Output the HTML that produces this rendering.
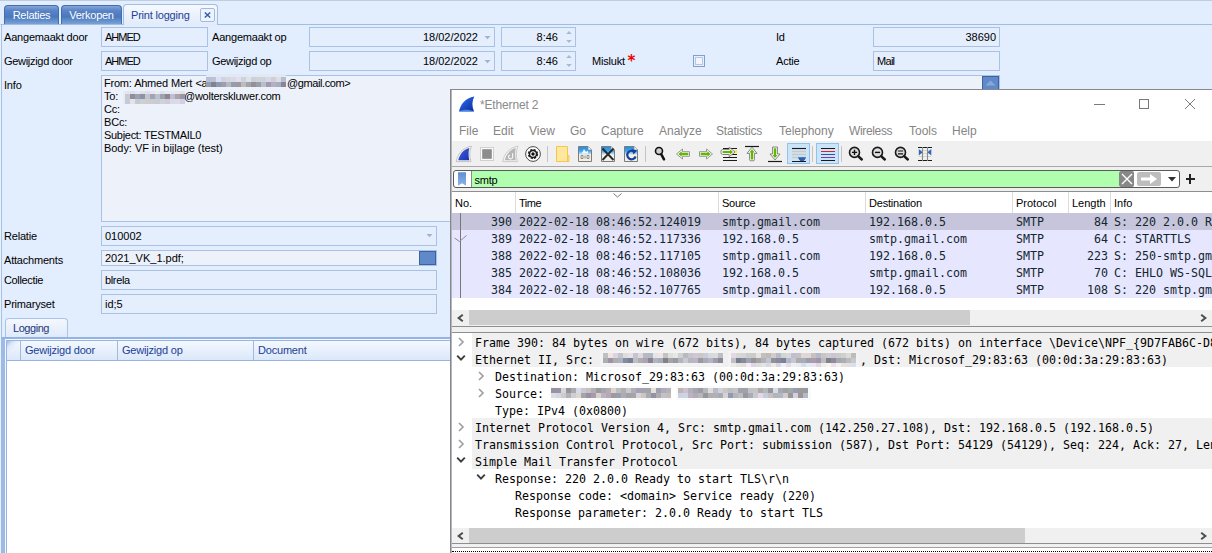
<!DOCTYPE html>
<html lang="nl">
<head>
<meta charset="utf-8">
<title>Print logging</title>
<style>
*{box-sizing:border-box;margin:0;padding:0}
html,body{width:1212px;height:553px;overflow:hidden;background:#e2edfd}
body{position:relative;font-family:"Liberation Sans",sans-serif;font-size:11px;color:#000;-webkit-font-smoothing:antialiased}
.abs,.lbl,.fld,.tab,.mn,.hd,.pk,.dt{position:absolute;white-space:pre}
/* ---------- underlying form ---------- */
#tabstrip{left:0;top:0;width:1212px;height:24px;background:#e2edfd;border-top:1px solid #bfcde3}
#content{left:0;top:24px;width:1212px;height:529px;background:#e2edfd;border-top:1px solid #a3bde0;border-left:1px solid #e9f1fc;box-shadow:inset 1px 0 0 #a6c0e8}
.tab{top:5px;height:19px;letter-spacing:-0.25px;border:1px solid #3f6db6;border-bottom:none;border-radius:4px 4px 0 0;color:#fff;line-height:18px;text-align:center;
 background:linear-gradient(#86a5d6 0,#5a85c6 25%,#4a78bd 60%,#79a2d6 100%)}
.tab.act{top:4px;height:21px;background:linear-gradient(#f6f9fe,#e1ebfb);border-color:#a3bde0;color:#223f95;line-height:20px;text-align:left;padding-left:7px}
.lbl{left:4px;height:14px;line-height:14px;letter-spacing:-0.2px}
.fld{height:20px;border:1px solid #a9c1e4;background:#e4eefc;line-height:18px;padding:0 3px}
.fld.r{text-align:right}
.fld.g{background:#ecf1fa}
/* ---------- wireshark ---------- */
#ws{left:450px;top:89px;width:770px;height:470px;background:#fff;border:1px solid #86888e}
.mn{top:124px;font-size:12px;color:#858585;line-height:14px}
.hd{top:197px;font-size:11px;line-height:13px;color:#000}
.mono{font-family:"DejaVu Sans Mono","Liberation Mono",monospace;font-size:11.63px}
.pk{height:17px;line-height:18px;font-family:"DejaVu Sans Mono","Liberation Mono",monospace;font-size:11.63px;color:#12272e}
.dt{height:17px;line-height:18px;font-family:"DejaVu Sans Mono","Liberation Mono",monospace;font-size:11.63px;color:#000}
</style>
</head>
<body>
<!-- ================= underlying application ================= -->
<div class="abs" id="tabstrip"></div>
<div class="abs" id="content"></div>
<div class="tab" style="left:4px;width:55px">Relaties</div>
<div class="tab" style="left:61px;width:61px">Verkopen</div>
<div class="tab act" style="left:123px;width:95px;letter-spacing:-0.2px">Print logging</div>
<div class="abs" style="left:200px;top:8px;width:15px;height:14px;border:1px solid #a3badd;border-radius:2px;background:#eef4fd"></div>
<svg class="abs" style="left:204px;top:12px" width="7" height="6" viewBox="0 0 7 6"><path d="M0.8 0.5L6.2 5.5M6.2 0.5L0.8 5.5" stroke="#3560b0" stroke-width="1.5" fill="none"/></svg>

<div class="lbl" style="top:30px">Aangemaakt door</div>
<div class="fld" style="left:101px;top:27px;width:107px;letter-spacing:-1px">AHMED</div>
<div class="lbl" style="left:212px;top:30px">Aangemaakt op</div>
<div class="fld r" style="left:309px;top:27px;width:186px;padding-right:16px">18/02/2022</div>
<div class="fld r" style="left:501px;top:27px;width:75px;padding-right:17px">8:46</div>
<div class="lbl" style="left:776px;top:30px">Id</div>
<div class="fld r" style="left:873px;top:27px;width:127px">38690</div>

<div class="lbl" style="top:54px;letter-spacing:-0.3px">Gewijzigd door</div>
<div class="fld" style="left:101px;top:51px;width:107px;letter-spacing:-1px">AHMED</div>
<div class="lbl" style="left:212px;top:54px;letter-spacing:-0.3px">Gewijzigd op</div>
<div class="fld r" style="left:309px;top:51px;width:186px;padding-right:16px">18/02/2022</div>
<div class="fld r" style="left:501px;top:51px;width:75px;padding-right:17px">8:46</div>
<div class="lbl" style="left:592px;top:54px">Mislukt</div>
<div class="lbl" style="left:627.5px;top:51px;color:#f00000;font-size:15px;font-weight:bold;font-family:'DejaVu Sans',sans-serif;line-height:20px;height:20px">*</div>
<div class="abs" style="left:693px;top:55px;width:12px;height:12px;border:1px solid #7f9fd0;background:#e9f0fb"></div>
<div class="abs" style="left:695px;top:57px;width:8px;height:8px;border:1px solid #b4c8e6;background:#f2f6fc"></div>
<div class="lbl" style="left:776px;top:54px">Actie</div>
<div class="fld" style="left:873px;top:51px;width:127px;letter-spacing:-0.7px">Mail</div>

<div class="lbl" style="top:78px">Info</div>
<div class="fld g" style="left:101px;top:75px;width:899px;height:147px"></div>
<div class="lbl it" style="left:104px;top:76px;letter-spacing:-0.25px;word-spacing:0.5px">From: Ahmed Mert &lt;a</div>
<div class="lbl it" style="left:287px;top:76px;letter-spacing:-0.4px">@gmail.com&gt;</div>
<div class="lbl it" style="left:104px;top:89px">To:</div>
<div class="lbl it" style="left:184px;top:89px;letter-spacing:-0.25px">@wolterskluwer.com</div>
<div class="lbl it" style="left:104px;top:102px">Cc:</div>
<div class="lbl it" style="left:104px;top:115px">BCc:</div>
<div class="lbl it" style="left:104px;top:128px;letter-spacing:-0.3px">Subject: TESTMAIL0</div>
<div class="lbl it" style="left:104px;top:141px;letter-spacing:-0.05px">Body: VF in bijlage (test)</div>

<div class="abs" style="left:982px;top:76px;width:17px;height:14px;background:#5f89c8;border:1px solid #3d62a0"></div>
<svg class="abs" style="left:985px;top:80px" width="11" height="6" viewBox="0 0 11 6"><path d="M0.5 5.5L5.5 0.5L10.5 5.5Z" fill="#86a9dc"/></svg>

<div class="lbl" style="top:229px">Relatie</div>
<div class="fld" style="left:101px;top:226px;width:336px">010002</div>
<div class="lbl" style="top:253px">Attachments</div>
<div class="fld g" style="left:101px;top:250px;width:336px;height:16px;line-height:14px">2021_VK_1.pdf;</div>
<div class="abs" style="left:419px;top:251px;width:17px;height:14px;background:#5f89c8;border:1px solid #3d62a0"></div>
<div class="lbl" style="top:273px;letter-spacing:-0.35px">Collectie</div>
<div class="fld" style="left:101px;top:270px;width:336px;letter-spacing:-0.35px">blrela</div>
<div class="lbl" style="top:297px">Primaryset</div>
<div class="fld" style="left:101px;top:294px;width:336px">id;5</div>

<svg class="abs" width="0" height="0" style="left:0;top:0"><defs><filter id="bl" x="-5%" y="-20%" width="110%" height="140%"><feGaussianBlur stdDeviation="0.6"/></filter></defs></svg>
<svg class="abs" style="left:484px;top:36px" width="7" height="4" viewBox="0 0 7 4"><path d="M0.5 0H6.5L3.5 3.2Z" fill="#9fb2d0"/></svg><svg class="abs" style="left:566px;top:31px" width="6" height="12" viewBox="0 0 6 12"><path d="M0.2 3L3 0L5.8 3ZM0.2 9L3 12L5.8 9Z" fill="#a9b9d3"/></svg>
<svg class="abs" style="left:484px;top:60px" width="7" height="4" viewBox="0 0 7 4"><path d="M0.5 0H6.5L3.5 3.2Z" fill="#9fb2d0"/></svg><svg class="abs" style="left:566px;top:55px" width="6" height="12" viewBox="0 0 6 12"><path d="M0.2 3L3 0L5.8 3ZM0.2 9L3 12L5.8 9Z" fill="#a9b9d3"/></svg>
<svg class="abs" style="left:426px;top:234px" width="7" height="4" viewBox="0 0 7 4"><path d="M0.5 0H6.5L3.5 3.2Z" fill="#9fb2d0"/></svg>
<!--MOSA-->
<svg class="abs" style="left:206px;top:74px" width="80" height="13" viewBox="0 0 80 13" shape-rendering="crispEdges"><rect width="80" height="13" fill="#e3e9f4"/><rect x="0" y="3" width="5" height="5" fill="#b6c1d5"/><rect x="5" y="3" width="5" height="5" fill="#bdc2ce"/><rect x="10" y="3" width="5" height="5" fill="#d6e2f5"/><rect x="15" y="3" width="5" height="5" fill="#d6cfe5"/><rect x="20" y="3" width="5" height="5" fill="#d4d9dd"/><rect x="25" y="3" width="5" height="5" fill="#d6dbe7"/><rect x="30" y="3" width="5" height="5" fill="#e4def3"/><rect x="35" y="3" width="5" height="5" fill="#cdd2dd"/><rect x="40" y="3" width="5" height="5" fill="#dde3e6"/><rect x="45" y="3" width="5" height="5" fill="#cbd0dc"/><rect x="50" y="3" width="5" height="5" fill="#cfd4d7"/><rect x="55" y="3" width="5" height="5" fill="#ced3de"/><rect x="60" y="3" width="5" height="5" fill="#d5dbe6"/><rect x="65" y="3" width="5" height="5" fill="#ccd1d5"/><rect x="70" y="3" width="5" height="5" fill="#e1dee2"/><rect x="75" y="3" width="5" height="5" fill="#b5bfd3"/><rect x="0" y="8" width="5" height="5" fill="#959fb3"/><rect x="5" y="8" width="5" height="5" fill="#7b8499"/><rect x="10" y="8" width="5" height="5" fill="#8f98ad"/><rect x="15" y="8" width="5" height="5" fill="#9b9eab"/><rect x="20" y="8" width="5" height="5" fill="#b4b8c5"/><rect x="25" y="8" width="5" height="5" fill="#999daa"/><rect x="30" y="8" width="5" height="5" fill="#9e999e"/><rect x="35" y="8" width="5" height="5" fill="#bebabe"/><rect x="40" y="8" width="5" height="5" fill="#a1a5a9"/><rect x="45" y="8" width="5" height="5" fill="#959095"/><rect x="50" y="8" width="5" height="5" fill="#9a9daa"/><rect x="55" y="8" width="5" height="5" fill="#b9beca"/><rect x="60" y="8" width="5" height="5" fill="#a39ab1"/><rect x="65" y="8" width="5" height="5" fill="#b5aec4"/><rect x="70" y="8" width="5" height="5" fill="#a4aec3"/><rect x="75" y="8" width="5" height="5" fill="#8d849c"/></svg>
<svg class="abs" style="left:123px;top:91px" width="62" height="13" viewBox="0 0 62 13" shape-rendering="crispEdges"><rect width="62" height="13" fill="#e6ebf5"/><rect x="2" y="0" width="5" height="3" fill="#e1e6f0"/><rect x="7" y="0" width="5" height="3" fill="#d8e2f5"/><rect x="12" y="0" width="5" height="3" fill="#ebe4f8"/><rect x="17" y="0" width="5" height="3" fill="#dee3e5"/><rect x="22" y="0" width="5" height="3" fill="#dadfe9"/><rect x="27" y="0" width="5" height="3" fill="#eae3f7"/><rect x="32" y="0" width="5" height="3" fill="#e7ecee"/><rect x="37" y="0" width="5" height="3" fill="#dde2ec"/><rect x="42" y="0" width="5" height="3" fill="#e3e8f2"/><rect x="47" y="0" width="5" height="3" fill="#e5eaf4"/><rect x="52" y="0" width="5" height="3" fill="#eae7e9"/><rect x="57" y="0" width="5" height="3" fill="#dee3e5"/><rect x="2" y="3" width="5" height="5" fill="#cbc7ca"/><rect x="7" y="3" width="5" height="5" fill="#8c8f9c"/><rect x="12" y="3" width="5" height="5" fill="#9ea1ae"/><rect x="17" y="3" width="5" height="5" fill="#8a93a8"/><rect x="22" y="3" width="5" height="5" fill="#c0c5d0"/><rect x="27" y="3" width="5" height="5" fill="#a1a4b1"/><rect x="32" y="3" width="5" height="5" fill="#bcc0cc"/><rect x="37" y="3" width="5" height="5" fill="#9da1ad"/><rect x="42" y="3" width="5" height="5" fill="#8d878d"/><rect x="47" y="3" width="5" height="5" fill="#c3bbd1"/><rect x="52" y="3" width="5" height="5" fill="#a9a4a8"/><rect x="57" y="3" width="5" height="5" fill="#9c93aa"/><rect x="2" y="8" width="5" height="5" fill="#c1cbde"/><rect x="7" y="8" width="5" height="5" fill="#e6e3e6"/><rect x="12" y="8" width="5" height="5" fill="#c4c9d4"/><rect x="17" y="8" width="5" height="5" fill="#cdd1d4"/><rect x="22" y="8" width="5" height="5" fill="#cfcbce"/><rect x="27" y="8" width="5" height="5" fill="#c9cdd0"/><rect x="32" y="8" width="5" height="5" fill="#c7cbd6"/><rect x="37" y="8" width="5" height="5" fill="#cfd3d6"/><rect x="42" y="8" width="5" height="5" fill="#d1c9de"/><rect x="47" y="8" width="5" height="5" fill="#d7dbe6"/><rect x="52" y="8" width="5" height="5" fill="#dfd7ec"/><rect x="57" y="8" width="5" height="5" fill="#cdd2dc"/></svg>
<!--/MOSA-->
<!-- logging tab + grid -->
<div class="abs" style="left:5px;top:318px;width:63px;height:20px;border:1px solid #a9c4e8;border-bottom:none;border-radius:4px 4px 0 0;background:linear-gradient(#f4f8fe,#dde9fa);color:#1c3878;line-height:19px;padding-left:7px;letter-spacing:-0.45px">Logging</div>
<div class="abs" style="left:1px;top:337px;width:1211px;height:216px;background:linear-gradient(#8fb0e1,#9dbbe7 3px,#9dbbe7)"></div>
<div class="abs" style="left:5px;top:339px;width:1207px;height:214px;background:#f2f7ff"></div>
<div class="abs" style="left:6px;top:340px;width:1206px;height:213px;background:#fff;border-left:1px solid #98b6e2;border-top:1px solid #98b6e2"></div>
<div class="abs" style="left:7px;top:341px;width:1205px;height:20px;background:linear-gradient(#f4f8fe,#dbe8fa);border-bottom:1px solid #94b4e2"></div>
<div class="abs" style="left:7px;top:341px;width:13px;height:19px;background:linear-gradient(135deg,#9db8df 0,#dbe7f8 22%,rgba(230,239,252,0) 45%)"></div>
<div class="abs" style="left:20px;top:341px;width:1px;height:19px;background:#9dbae4"></div>
<div class="abs" style="left:117px;top:341px;width:1px;height:19px;background:#9dbae4"></div>
<div class="abs" style="left:253px;top:341px;width:1px;height:19px;background:#9dbae4"></div>
<div class="lbl" style="left:25px;top:343px;color:#1c3f94">Gewijzigd door</div>
<div class="lbl" style="left:122px;top:343px;color:#1c3f94">Gewijzigd op</div>
<div class="lbl" style="left:258px;top:343px;color:#1c3f94">Document</div>

<!-- ================= wireshark window ================= -->
<div class="abs" id="ws"></div>
<!-- title bar -->
<svg class="abs" style="left:457px;top:95px" width="19" height="18" viewBox="457 95 19 18"><defs><linearGradient id="lg" x1="0" y1="0" x2="0.9" y2="1"><stop offset="0" stop-color="#4f8df0"/><stop offset="0.45" stop-color="#1f55cf"/><stop offset="1" stop-color="#0b2f9c"/></linearGradient></defs><path d="M459 111.4C460.3 104.3 465.2 98 474.3 96.4C472 101 471.7 106.2 474 111.4Z" fill="url(#lg)"/><path d="M459 111.4C463 109.3 469.5 108.9 474 111.4Z" fill="#5b95f2" opacity=".8"/></svg>
<div class="abs" style="left:480px;top:98px;font-size:12px;line-height:15px;color:#8a8a8a;letter-spacing:-0.15px">*Ethernet 2</div>
<div class="abs" style="left:1094px;top:104px;width:11px;height:1px;background:#7a7a7a"></div>
<div class="abs" style="left:1139px;top:99px;width:10px;height:10px;border:1px solid #7a7a7a"></div>
<svg class="abs" style="left:1184px;top:98px" width="12" height="12" viewBox="0 0 12 12"><path d="M1 1L11 11M11 1L1 11" stroke="#7a7a7a" stroke-width="1" fill="none"/></svg>
<!-- menu -->
<div class="mn" style="left:459px">File</div>
<div class="mn" style="left:493px">Edit</div>
<div class="mn" style="left:529px">View</div>
<div class="mn" style="left:570px">Go</div>
<div class="mn" style="left:601px">Capture</div>
<div class="mn" style="left:659px">Analyze</div>
<div class="mn" style="left:716px;letter-spacing:-0.2px">Statistics</div>
<div class="mn" style="left:779px">Telephony</div>
<div class="mn" style="left:849px;letter-spacing:-0.35px">Wireless</div>
<div class="mn" style="left:909px">Tools</div>
<div class="mn" style="left:952px">Help</div>
<!-- toolbar -->
<div class="abs" style="left:451px;top:141px;width:761px;height:50px;background:#f0f0f0"></div>
<div class="abs" style="left:451px;top:166px;width:761px;height:1px;background:#a8a8a8"></div>
<svg class="abs" style="left:452px;top:141px" width="500" height="25" viewBox="452 141 500 25">
<defs><linearGradient id="fb" x1="0" y1="0" x2="1" y2="1"><stop offset="0" stop-color="#3a63e0"/><stop offset="1" stop-color="#1f2fb0"/></linearGradient><linearGradient id="fg" x1="0" y1="0" x2="0" y2="1"><stop offset="0" stop-color="#1f8ee2"/><stop offset="0.3" stop-color="#3fa2e8"/><stop offset="0.5" stop-color="#bfe0f6"/><stop offset="0.56" stop-color="#f4f4ea"/><stop offset="1" stop-color="#efefe2"/></linearGradient></defs>
<path d="M456.2 161.6C457.6 154.2 462.4 147.8 471.4 146.1C469.4 151 469.2 156.4 471 161.6Z" fill="#f4f4f4" stroke="#bdbdbd" stroke-width="0.9"/><path d="M458.3 160.3C459.6 154.6 463.2 149.8 469.3 148.1C468.3 152 468.4 156.3 469.3 160.3Z" fill="url(#fb)"/>
<rect x="480.5" y="147.5" width="13" height="13" fill="#fafafa" stroke="#d0d0d0" stroke-width="1"/><rect x="482.2" y="149.2" width="9.6" height="9.6" fill="#8c8c8c"/>
<path d="M502.7 161.6C504.1 154.2 508.9 147.8 517.9 146.1C515.9 151 515.7 156.4 517.5 161.6Z" fill="#f4f4f4" stroke="#c6c6c6" stroke-width="0.9"/><path d="M504.8 160.3C506.1 154.6 509.7 149.8 515.8 148.1C514.8 152 514.9 156.3 515.8 160.3Z" fill="#b6b6b6"/><path d="M512.6 153.2V157A2 2 0 1 1 510 155" fill="none" stroke="#f4f4f4" stroke-width="1.2"/>
<circle cx="533" cy="154" r="7.4" fill="#fff" stroke="#4a4a4a" stroke-width="1"/><circle cx="533" cy="154" r="4.3" fill="none" stroke="#1c1c1c" stroke-width="1.7" stroke-dasharray="2.2 1.18"/><circle cx="533" cy="154" r="3.5" fill="none" stroke="#1c1c1c" stroke-width="1.5"/><circle cx="533" cy="154" r="1.7" fill="#111"/>
<path d="M547.5 146V162" stroke="#c4c4c4" stroke-width="1"/><path d="M645.5 146V162" stroke="#c4c4c4" stroke-width="1"/><path d="M812.5 146V162" stroke="#c4c4c4" stroke-width="1"/><path d="M841.5 146V162" stroke="#c4c4c4" stroke-width="1"/>
<path d="M556.5 146.5H567.5V155.5H569V161.5H556.5Z" fill="#ffe79e" stroke="#f3c74c" stroke-width="1"/><path d="M567.5 155.5V161.5" stroke="#f3c74c" stroke-width="1"/>
<path d="M578.5 146.5H588L591.5 150V161.5H578.5Z" fill="url(#fg)" stroke="#7c7c7c" stroke-width="1"/><path d="M588 146.5V150H591.5" fill="#fff" stroke="#8c8c8c" stroke-width="0.8"/><path d="M581 158.5h2v-3h-2zM585 155.5v3M587 158.5h2v-3h-2z" fill="none" stroke="#777" stroke-width="0.8"/><path d="M582 153L584 149L586 152L588 150.5V153.5H581Z" fill="#fff" opacity=".9"/>
<path d="M601.5 146.5H611L614.5 150V161.5H601.5Z" fill="url(#fg)" stroke="#7c7c7c" stroke-width="1"/><path d="M611 146.5V150H614.5" fill="#fff" stroke="#8c8c8c" stroke-width="0.8"/><path d="M602.5 148.5L613.5 160M613.5 148.5L602.5 160" stroke="#2a2a2a" stroke-width="1.9"/>
<path d="M624.5 146.5H634L637.5 150V161.5H624.5Z" fill="url(#fg)" stroke="#7c7c7c" stroke-width="1"/><path d="M634 146.5V150H637.5" fill="#fff" stroke="#8c8c8c" stroke-width="0.8"/><path d="M634.8 152.2A4.3 4.3 0 1 0 635.6 156.5" fill="none" stroke="#1b3f9c" stroke-width="2.2"/><path d="M631.5 149L637 150.5L633.5 154.5Z" fill="#1b3f9c"/>
<circle cx="659" cy="151" r="3.5" fill="#d0d0d0" stroke="#111" stroke-width="1.6"/><path d="M661.3 154.3L664 159.3" stroke="#111" stroke-width="2.5" stroke-linecap="round"/>
<path d="M676.5 154L682.5 149V151.7H689.5V156.3H682.5V159Z" fill="#fff" stroke="#8c8c8c" stroke-width="0.9"/><path d="M678.3 154L681.6 151.2V152.8H688.4V155.2H681.6V156.8Z" fill="#62b800"/>
<path d="M712.5 154L706.5 149V151.7H699.5V156.3H706.5V159Z" fill="#fff" stroke="#8c8c8c" stroke-width="0.9"/><path d="M710.7 154L707.4 151.2V152.8H700.6V155.2H707.4V156.8Z" fill="#62b800"/>
<path d="M723 148.5H737M723 154.5H737M723 157.5H737M723 160.5H737" stroke="#1a1a1a" stroke-width="1"/><rect x="733.5" y="150" width="3.5" height="3" fill="#ffe44a"/><path d="M735 152L729.2 147.2V149.6H722.6Q721 149.6 721 151.2V152.8Q721 154.4 722.6 154.4H729.2V156.8Z" fill="#fff" stroke="#777" stroke-width="0.9"/><path d="M733 152L730 149.6V151H722.6V153H730V154.4Z" fill="#62b800"/>
<path d="M745 146.5H759" stroke="#1a1a1a" stroke-width="1.2"/><path d="M752 147.2L757 153.4H754.4V159.6Q754.4 160.8 753.2 160.8H750.8Q749.6 160.8 749.6 159.6V153.4H747Z" fill="#fff" stroke="#777" stroke-width="0.9"/><path d="M752 149.2L754.6 152.4H753.2V159.4H750.8V152.4H749.4Z" fill="#62b800"/>
<path d="M768 161.5H782" stroke="#1a1a1a" stroke-width="1.2"/><path d="M775 160L780 154H777.4V147H772.6V154H770Z" fill="#fff" stroke="#777" stroke-width="0.9"/><path d="M775 158L777.6 155H776.2V148.2H773.8V155H772.4Z" fill="#62b800"/>
<rect x="787.5" y="143.5" width="22" height="20" fill="#cce4f7" stroke="#8fc3ee" stroke-width="1"/><path d="M792 148.5H806" stroke="#1a1a1a" stroke-width="1.1"/><path d="M792 151.4H806M792 154.4H806M792 157.4H806" stroke="#c9c9bf" stroke-width="1.5"/><path d="M792 161.5H806" stroke="#1a1a1a" stroke-width="1"/><path d="M798 157.2H806C805.5 159.2 804.5 160 803.5 161H800.5C799.5 160 798.5 159.2 798 157.2Z" fill="#2f5fb4"/>
<rect x="816.5" y="143.5" width="22" height="20" fill="#cce4f7" stroke="#8fc3ee" stroke-width="1"/><path d="M821 148.5H835M821 160.5H835" stroke="#1a1a1a" stroke-width="1.2"/><path d="M821 151.5H835" stroke="#e02020" stroke-width="1"/><path d="M821 154.5H835" stroke="#2a50c0" stroke-width="1"/><path d="M821 157.5H835" stroke="#7a3f9a" stroke-width="1"/>
<circle cx="854.5" cy="152.4" r="5" fill="#dedede" stroke="#1a1a1a" stroke-width="1.6"/><path d="M858.4 156.3L861.8 159.5" stroke="#1a1a1a" stroke-width="2.5" stroke-linecap="round"/><path d="M851.9 152.4H857.1M854.5 149.8V155.0" stroke="#111" stroke-width="1.4"/><circle cx="877.5" cy="152.4" r="5" fill="#dedede" stroke="#1a1a1a" stroke-width="1.6"/><path d="M881.4 156.3L884.8 159.5" stroke="#1a1a1a" stroke-width="2.5" stroke-linecap="round"/><path d="M874.9 152.4H880.1" stroke="#111" stroke-width="1.4"/><circle cx="900.5" cy="152.4" r="5" fill="#dedede" stroke="#1a1a1a" stroke-width="1.6"/><path d="M904.4 156.3L907.8 159.5" stroke="#1a1a1a" stroke-width="2.5" stroke-linecap="round"/><path d="M897.9 151.0H903.1M897.9 153.8H903.1" stroke="#111" stroke-width="1.2"/>
<path d="M918 147.5H932M918 160.5H932" stroke="#1a1a1a" stroke-width="1.1"/><path d="M919 150.5H931M919 153.5H931M919 156.5H931" stroke="#d2d2ca" stroke-width="0.9"/><path d="M922.5 147V161M927.5 147V161" stroke="#8a8a8a" stroke-width="1.1"/><path d="M918.8 149L922.6 152.3L918.8 155.6ZM931.3 149L927.5 152.3L931.3 155.6Z" fill="#3068b8"/>
</svg>
<!-- filter bar -->
<div class="abs" style="left:453px;top:170px;width:727px;height:18px;border:1px solid #5a5a5a;border-radius:3px;background:#fff"></div>
<div class="abs" style="left:471px;top:171px;width:648px;height:16px;background:#afffaf;border-left:1px solid #8a8a8a"></div>
<svg class="abs" style="left:458px;top:172px" width="8" height="14" viewBox="0 0 8 14"><defs><linearGradient id="bk" x1="0" y1="0" x2="0" y2="1"><stop offset="0" stop-color="#5f8fd6"/><stop offset="1" stop-color="#8fb3e4"/></linearGradient></defs><path d="M0 0.3H8V13.7L4 11.2L0 13.7Z" fill="url(#bk)"/></svg>
<div class="abs" style="left:474.5px;top:173px;font-size:11px;line-height:14px;letter-spacing:-0.2px">smtp</div>
<div class="abs" style="left:1119px;top:171px;width:15px;height:16px;background:#878787;border-radius:2px"></div>
<svg class="abs" style="left:1121px;top:173px" width="12" height="12" viewBox="0 0 12 12"><path d="M1 1L11 11M11 1L1 11" stroke="#fff" stroke-width="1.4" fill="none"/></svg>
<div class="abs" style="left:1137px;top:172px;width:24px;height:14px;background:#bdbdbd;border-radius:2px"></div>
<svg class="abs" style="left:1140px;top:173px" width="18" height="12" viewBox="0 0 18 12"><path d="M1 4.5H10V1L17 6L10 11V7.5H1Z" fill="#fff"/></svg>
<svg class="abs" style="left:1168px;top:177px" width="8" height="5" viewBox="0 0 8 5"><path d="M0 0H8L4 4.5Z" fill="#303030"/></svg>
<div class="abs" style="left:1186px;top:178px;width:9px;height:2px;background:#222"></div>
<div class="abs" style="left:1189px;top:174px;width:2px;height:10px;background:#222"></div>
<!-- packet list -->
<div class="abs" style="left:451px;top:191px;width:761px;height:136px;background:#fff;border-top:1px solid #8e8e8e;border-bottom:1px solid #8e8e8e"></div>
<div class="abs" style="left:515px;top:192px;width:1px;height:21px;background:#dcdcdc"></div>
<div class="abs" style="left:718px;top:192px;width:1px;height:21px;background:#dcdcdc"></div>
<div class="abs" style="left:865px;top:192px;width:1px;height:21px;background:#dcdcdc"></div>
<div class="abs" style="left:1012px;top:192px;width:1px;height:21px;background:#dcdcdc"></div>
<div class="abs" style="left:1068px;top:192px;width:1px;height:21px;background:#dcdcdc"></div>
<div class="abs" style="left:1110px;top:192px;width:1px;height:21px;background:#dcdcdc"></div>
<div class="hd" style="left:455px">No.</div>
<div class="hd" style="left:519px;letter-spacing:-0.5px">Time</div>
<div class="hd" style="left:722px;letter-spacing:-0.25px">Source</div>
<div class="hd" style="left:869px;letter-spacing:-0.2px">Destination</div>
<div class="hd" style="left:1016px">Protocol</div>
<div class="hd" style="left:1072px">Length</div>
<div class="hd" style="left:1114px">Info</div>
<svg class="abs" style="left:613px;top:193px" width="9" height="5" viewBox="0 0 9 5"><path d="M0.5 0.5L4.5 4L8.5 0.5" stroke="#7a7a7a" stroke-width="1" fill="none"/></svg>
<div class="abs" style="left:451px;top:213px;width:761px;height:17px;background:#c6c5dc"></div>
<div class="pk" style="left:455px;top:213px;width:57px;text-align:right">390</div><div class="pk" style="left:519px;top:213px">2022-02-18 08:46:52.124019</div><div class="pk" style="left:722px;top:213px">smtp.gmail.com</div><div class="pk" style="left:869px;top:213px">192.168.0.5</div><div class="pk" style="left:1016px;top:213px">SMTP</div><div class="pk" style="left:1070px;top:213px;width:38px;text-align:right">84</div><div class="pk" style="left:1114px;top:213px">S: 220 2.0.0 R</div>
<div class="abs" style="left:451px;top:230px;width:761px;height:17px;background:#e7e6ff"></div>
<div class="pk" style="left:455px;top:230px;width:57px;text-align:right">389</div><div class="pk" style="left:519px;top:230px">2022-02-18 08:46:52.117336</div><div class="pk" style="left:722px;top:230px">192.168.0.5</div><div class="pk" style="left:869px;top:230px">smtp.gmail.com</div><div class="pk" style="left:1016px;top:230px">SMTP</div><div class="pk" style="left:1070px;top:230px;width:38px;text-align:right">64</div><div class="pk" style="left:1114px;top:230px">C: STARTTLS</div>
<div class="abs" style="left:451px;top:247px;width:761px;height:17px;background:#e7e6ff"></div>
<div class="pk" style="left:455px;top:247px;width:57px;text-align:right">388</div><div class="pk" style="left:519px;top:247px">2022-02-18 08:46:52.117105</div><div class="pk" style="left:722px;top:247px">smtp.gmail.com</div><div class="pk" style="left:869px;top:247px">192.168.0.5</div><div class="pk" style="left:1016px;top:247px">SMTP</div><div class="pk" style="left:1070px;top:247px;width:38px;text-align:right">223</div><div class="pk" style="left:1114px;top:247px">S: 250-smtp.gm</div>
<div class="abs" style="left:451px;top:264px;width:761px;height:17px;background:#e7e6ff"></div>
<div class="pk" style="left:455px;top:264px;width:57px;text-align:right">385</div><div class="pk" style="left:519px;top:264px">2022-02-18 08:46:52.108036</div><div class="pk" style="left:722px;top:264px">192.168.0.5</div><div class="pk" style="left:869px;top:264px">smtp.gmail.com</div><div class="pk" style="left:1016px;top:264px">SMTP</div><div class="pk" style="left:1070px;top:264px;width:38px;text-align:right">70</div><div class="pk" style="left:1114px;top:264px">C: EHLO WS-SQL</div>
<div class="abs" style="left:451px;top:281px;width:761px;height:17px;background:#e7e6ff"></div>
<div class="pk" style="left:455px;top:281px;width:57px;text-align:right">384</div><div class="pk" style="left:519px;top:281px">2022-02-18 08:46:52.107765</div><div class="pk" style="left:722px;top:281px">smtp.gmail.com</div><div class="pk" style="left:869px;top:281px">192.168.0.5</div><div class="pk" style="left:1016px;top:281px">SMTP</div><div class="pk" style="left:1070px;top:281px;width:38px;text-align:right">108</div><div class="pk" style="left:1114px;top:281px">S: 220 smtp.gm</div>
<div class="abs" style="left:460px;top:213px;width:1px;height:85px;background:#777"></div>
<svg class="abs" style="left:454px;top:235px" width="13" height="8" viewBox="0 0 13 8"><path d="M0.5 3L5.5 6.5L12.5 0.5" stroke="#8a8a9a" stroke-width="1" fill="none"/></svg>

<!-- packet list scrollbar -->
<div class="abs" style="left:451px;top:310px;width:761px;height:16px;background:#f0f0f0"></div>
<div class="abs" style="left:469px;top:310px;width:501px;height:15px;background:#cdcdcd"></div>
<svg class="abs" style="left:457px;top:314px" width="7" height="8" viewBox="0 0 7 8"><path d="M5.8 0.8L1.6 4L5.8 7.2" stroke="#4c4c4c" stroke-width="2" fill="none"/></svg>
<svg class="abs" style="left:1200px;top:314px" width="7" height="8" viewBox="0 0 7 8"><path d="M1.2 0.8L5.4 4L1.2 7.2" stroke="#4c4c4c" stroke-width="2" fill="none"/></svg>
<!-- splitter + detail pane -->
<div class="abs" style="left:451px;top:327px;width:761px;height:6px;background:#f0f0f0"></div>
<div class="abs" style="left:451px;top:332px;width:761px;height:212px;background:#fff;border-top:1px solid #8e8e8e;border-bottom:1px solid #8e8e8e"></div>
<div class="abs" style="left:472px;top:333px;width:740px;height:17px;background:#f0f0f0"></div>
<div class="dt" style="left:475px;top:334px">Frame 390: 84 bytes on wire (672 bits), 84 bytes captured (672 bits) on interface \Device\NPF_{9D7FAB6C-D8</div>
<svg class="abs" style="left:457px;top:337px" width="8" height="10" viewBox="0 0 8 10"><path d="M2 1L6 5L2 9" stroke="#a0a0a0" stroke-width="1.7" fill="none"/></svg>
<div class="abs" style="left:472px;top:350px;width:740px;height:17px;background:#f0f0f0"></div>
<div class="dt" style="left:475px;top:351px">Ethernet II, Src: <span style="display:inline-block;width:259px"></span>, Dst: Microsof_29:83:63 (00:0d:3a:29:83:63)</div>
<svg class="abs" style="left:456px;top:354px" width="10" height="8" viewBox="0 0 10 8"><path d="M1.2 1.7L5 5.6L8.8 1.7" stroke="#3c3c3c" stroke-width="1.9" fill="none"/></svg>
<div class="dt" style="left:495px;top:368px">Destination: Microsof_29:83:63 (00:0d:3a:29:83:63)</div>
<svg class="abs" style="left:477px;top:371px" width="8" height="10" viewBox="0 0 8 10"><path d="M2 1L6 5L2 9" stroke="#a0a0a0" stroke-width="1.7" fill="none"/></svg>
<div class="dt" style="left:495px;top:385px">Source: <span style="display:inline-block;width:226px"></span></div>
<svg class="abs" style="left:477px;top:388px" width="8" height="10" viewBox="0 0 8 10"><path d="M2 1L6 5L2 9" stroke="#a0a0a0" stroke-width="1.7" fill="none"/></svg>
<div class="dt" style="left:495px;top:402px">Type: IPv4 (0x0800)</div>
<div class="abs" style="left:472px;top:418px;width:740px;height:17px;background:#f0f0f0"></div>
<div class="dt" style="left:475px;top:419px">Internet Protocol Version 4, Src: smtp.gmail.com (142.250.27.108), Dst: 192.168.0.5 (192.168.0.5)</div>
<svg class="abs" style="left:457px;top:422px" width="8" height="10" viewBox="0 0 8 10"><path d="M2 1L6 5L2 9" stroke="#a0a0a0" stroke-width="1.7" fill="none"/></svg>
<div class="abs" style="left:472px;top:435px;width:740px;height:17px;background:#f0f0f0"></div>
<div class="dt" style="left:475px;top:436px">Transmission Control Protocol, Src Port: submission (587), Dst Port: 54129 (54129), Seq: 224, Ack: 27, Len</div>
<svg class="abs" style="left:457px;top:439px" width="8" height="10" viewBox="0 0 8 10"><path d="M2 1L6 5L2 9" stroke="#a0a0a0" stroke-width="1.7" fill="none"/></svg>
<div class="abs" style="left:472px;top:452px;width:740px;height:17px;background:#f0f0f0"></div>
<div class="dt" style="left:475px;top:453px">Simple Mail Transfer Protocol</div>
<svg class="abs" style="left:456px;top:456px" width="10" height="8" viewBox="0 0 10 8"><path d="M1.2 1.7L5 5.6L8.8 1.7" stroke="#3c3c3c" stroke-width="1.9" fill="none"/></svg>
<div class="dt" style="left:495px;top:470px">Response: 220 2.0.0 Ready to start TLS\r\n</div>
<svg class="abs" style="left:476px;top:473px" width="10" height="8" viewBox="0 0 10 8"><path d="M1.2 1.7L5 5.6L8.8 1.7" stroke="#3c3c3c" stroke-width="1.9" fill="none"/></svg>
<div class="dt" style="left:515px;top:487px">Response code: &lt;domain&gt; Service ready (220)</div>
<div class="dt" style="left:515px;top:504px">Response parameter: 2.0.0 Ready to start TLS</div>

<div class="abs" style="left:451px;top:528px;width:761px;height:15px;background:#f0f0f0"></div>
<div class="abs" style="left:469px;top:528px;width:556px;height:15px;background:#cdcdcd"></div>
<svg class="abs" style="left:457px;top:532px" width="7" height="8" viewBox="0 0 7 8"><path d="M5.8 0.8L1.6 4L5.8 7.2" stroke="#4c4c4c" stroke-width="2" fill="none"/></svg>
<svg class="abs" style="left:1200px;top:532px" width="7" height="8" viewBox="0 0 7 8"><path d="M1.2 0.8L5.4 4L1.2 7.2" stroke="#4c4c4c" stroke-width="2" fill="none"/></svg>
<div class="abs" style="left:451px;top:544px;width:761px;height:9px;background:#f0f0f0"></div>
<div class="abs" style="left:451px;top:547px;width:761px;height:1px;background:#a0a0a0"></div>
<div class="abs" style="left:451px;top:548px;width:761px;height:5px;background:#fff"></div>
<div class="abs" style="left:452px;top:551px;width:760px;height:0;border-top:1px dotted #000"></div>

<!--MOSB-->
<svg class="abs" style="left:600px;top:351px" width="123" height="15" viewBox="0 0 123 15" shape-rendering="crispEdges"><rect width="123" height="15" fill="#f3f3f4"/><rect x="3" y="2" width="5" height="5" fill="#bfc0c6"/><rect x="8" y="2" width="5" height="5" fill="#eee6e1"/><rect x="13" y="2" width="5" height="5" fill="#ded2e0"/><rect x="18" y="2" width="5" height="5" fill="#c3c4ca"/><rect x="23" y="2" width="5" height="5" fill="#deded9"/><rect x="28" y="2" width="5" height="5" fill="#eadeea"/><rect x="33" y="2" width="5" height="5" fill="#c5c6cb"/><rect x="38" y="2" width="5" height="5" fill="#e2d7e4"/><rect x="43" y="2" width="5" height="5" fill="#b9b9c0"/><rect x="48" y="2" width="5" height="5" fill="#b1b8c7"/><rect x="53" y="2" width="5" height="5" fill="#e5e5e8"/><rect x="58" y="2" width="5" height="5" fill="#eee6e1"/><rect x="63" y="2" width="5" height="5" fill="#c2c3c9"/><rect x="68" y="2" width="5" height="5" fill="#e0e0db"/><rect x="73" y="2" width="5" height="5" fill="#e8e8e2"/><rect x="78" y="2" width="5" height="5" fill="#d0d1d5"/><rect x="83" y="2" width="5" height="5" fill="#b9bac0"/><rect x="88" y="2" width="5" height="5" fill="#c5c5cb"/><rect x="93" y="2" width="5" height="5" fill="#d1c6d5"/><rect x="98" y="2" width="5" height="5" fill="#cec6c4"/><rect x="103" y="2" width="5" height="5" fill="#c7cdda"/><rect x="108" y="2" width="5" height="5" fill="#d9d9dd"/><rect x="113" y="2" width="5" height="5" fill="#dbdbde"/><rect x="118" y="2" width="5" height="5" fill="#bdbec4"/><rect x="3" y="7" width="5" height="5" fill="#acaeb5"/><rect x="8" y="7" width="5" height="5" fill="#9d92a6"/><rect x="13" y="7" width="5" height="5" fill="#aeafaf"/><rect x="18" y="7" width="5" height="5" fill="#abb2c1"/><rect x="23" y="7" width="5" height="5" fill="#848c9f"/><rect x="28" y="7" width="5" height="5" fill="#788094"/><rect x="33" y="7" width="5" height="5" fill="#bebfc5"/><rect x="38" y="7" width="5" height="5" fill="#adaeae"/><rect x="43" y="7" width="5" height="5" fill="#aca2b4"/><rect x="48" y="7" width="5" height="5" fill="#8c8298"/><rect x="53" y="7" width="5" height="5" fill="#b4b5bc"/><rect x="58" y="7" width="5" height="5" fill="#a6adbd"/><rect x="63" y="7" width="5" height="5" fill="#868084"/><rect x="68" y="7" width="5" height="5" fill="#a3a4ad"/><rect x="73" y="7" width="5" height="5" fill="#999aa4"/><rect x="78" y="7" width="5" height="5" fill="#b4b5bc"/><rect x="83" y="7" width="5" height="5" fill="#cacbd0"/><rect x="88" y="7" width="5" height="5" fill="#b6b7be"/><rect x="93" y="7" width="5" height="5" fill="#bfb4c5"/><rect x="98" y="7" width="5" height="5" fill="#9899a3"/><rect x="103" y="7" width="5" height="5" fill="#aaabb3"/><rect x="108" y="7" width="5" height="5" fill="#afb6c5"/><rect x="113" y="7" width="5" height="5" fill="#a59bae"/><rect x="118" y="7" width="5" height="5" fill="#888995"/></svg>
<svg class="abs" style="left:728px;top:351px" width="131" height="16" viewBox="0 0 131 16" shape-rendering="crispEdges"><rect width="131" height="16" fill="#f3f3f4"/><rect x="3" y="2" width="5" height="5" fill="#e5d9e6"/><rect x="8" y="2" width="5" height="5" fill="#d7d7d3"/><rect x="13" y="2" width="5" height="5" fill="#d4d5d9"/><rect x="18" y="2" width="5" height="5" fill="#cccdca"/><rect x="23" y="2" width="5" height="5" fill="#d1c9c7"/><rect x="28" y="2" width="5" height="5" fill="#e3e4e6"/><rect x="33" y="2" width="5" height="5" fill="#c5bebc"/><rect x="38" y="2" width="5" height="5" fill="#c1bab9"/><rect x="43" y="2" width="5" height="5" fill="#d3cbc8"/><rect x="48" y="2" width="5" height="5" fill="#b4bbc9"/><rect x="53" y="2" width="5" height="5" fill="#d3d4d0"/><rect x="58" y="2" width="5" height="5" fill="#d7d8dc"/><rect x="63" y="2" width="5" height="5" fill="#c7bccc"/><rect x="68" y="2" width="5" height="5" fill="#c2c3c8"/><rect x="73" y="2" width="5" height="5" fill="#e0d8d4"/><rect x="78" y="2" width="5" height="5" fill="#dfd7d3"/><rect x="83" y="2" width="5" height="5" fill="#c7c0be"/><rect x="88" y="2" width="5" height="5" fill="#b2b9c8"/><rect x="93" y="2" width="5" height="5" fill="#ccc5c2"/><rect x="98" y="2" width="5" height="5" fill="#cccdd2"/><rect x="103" y="2" width="5" height="5" fill="#cec3d2"/><rect x="108" y="2" width="5" height="5" fill="#cbccc9"/><rect x="113" y="2" width="5" height="5" fill="#cfd0cd"/><rect x="118" y="2" width="5" height="5" fill="#dbdbd7"/><rect x="123" y="2" width="5" height="5" fill="#bcbcbb"/><rect x="3" y="7" width="5" height="5" fill="#c0c1c7"/><rect x="8" y="7" width="5" height="5" fill="#767e93"/><rect x="13" y="7" width="5" height="5" fill="#888a95"/><rect x="18" y="7" width="5" height="5" fill="#9da5b5"/><rect x="23" y="7" width="5" height="5" fill="#959699"/><rect x="28" y="7" width="5" height="5" fill="#aaa3a4"/><rect x="33" y="7" width="5" height="5" fill="#b1b2ba"/><rect x="38" y="7" width="5" height="5" fill="#c0c7d4"/><rect x="43" y="7" width="5" height="5" fill="#90919c"/><rect x="48" y="7" width="5" height="5" fill="#91879c"/><rect x="53" y="7" width="5" height="5" fill="#7a8296"/><rect x="58" y="7" width="5" height="5" fill="#b1b8c7"/><rect x="63" y="7" width="5" height="5" fill="#c2c8d6"/><rect x="68" y="7" width="5" height="5" fill="#b1aaab"/><rect x="73" y="7" width="5" height="5" fill="#a5acbc"/><rect x="78" y="7" width="5" height="5" fill="#9d9ea7"/><rect x="83" y="7" width="5" height="5" fill="#a89db0"/><rect x="88" y="7" width="5" height="5" fill="#a096a9"/><rect x="93" y="7" width="5" height="5" fill="#bcbdc3"/><rect x="98" y="7" width="5" height="5" fill="#808287"/><rect x="103" y="7" width="5" height="5" fill="#8d8e99"/><rect x="108" y="7" width="5" height="5" fill="#a6a7b0"/><rect x="113" y="7" width="5" height="5" fill="#abacb4"/><rect x="118" y="7" width="5" height="5" fill="#babbba"/><rect x="123" y="7" width="5" height="5" fill="#c8c9ce"/><rect x="3" y="12" width="5" height="4" fill="#edede7"/><rect x="8" y="12" width="5" height="4" fill="#e5e5e0"/><rect x="13" y="12" width="5" height="4" fill="#dfe0db"/><rect x="18" y="12" width="5" height="4" fill="#f6eaf6"/><rect x="23" y="12" width="5" height="4" fill="#e0d5e2"/><rect x="28" y="12" width="5" height="4" fill="#dddde0"/><rect x="33" y="12" width="5" height="4" fill="#e4e4e7"/><rect x="38" y="12" width="5" height="4" fill="#dadade"/><rect x="43" y="12" width="5" height="4" fill="#f0e8e2"/><rect x="48" y="12" width="5" height="4" fill="#d2d9e4"/><rect x="53" y="12" width="5" height="4" fill="#efeff1"/><rect x="58" y="12" width="5" height="4" fill="#e7dbe8"/><rect x="63" y="12" width="5" height="4" fill="#f1f1eb"/><rect x="68" y="12" width="5" height="4" fill="#e7edf7"/><rect x="73" y="12" width="5" height="4" fill="#d8dee9"/><rect x="78" y="12" width="5" height="4" fill="#e5ebf5"/><rect x="83" y="12" width="5" height="4" fill="#efe3ef"/><rect x="88" y="12" width="5" height="4" fill="#e2d6e3"/><rect x="93" y="12" width="5" height="4" fill="#efefe9"/><rect x="98" y="12" width="5" height="4" fill="#f6f6ef"/><rect x="103" y="12" width="5" height="4" fill="#ebe0ec"/><rect x="108" y="12" width="5" height="4" fill="#f2f2ec"/><rect x="113" y="12" width="5" height="4" fill="#e8e0db"/><rect x="118" y="12" width="5" height="4" fill="#e1e1e4"/><rect x="123" y="12" width="5" height="4" fill="#dae0eb"/></svg>
<svg class="abs" style="left:551px;top:386px" width="120" height="14" viewBox="0 0 120 14" shape-rendering="crispEdges"><rect width="120" height="14" fill="#fafafb"/><rect x="0" y="2" width="5" height="5" fill="#93949f"/><rect x="5" y="2" width="5" height="5" fill="#9c91a6"/><rect x="10" y="2" width="5" height="5" fill="#d7d8dc"/><rect x="15" y="2" width="5" height="5" fill="#93959f"/><rect x="20" y="2" width="5" height="5" fill="#aaabac"/><rect x="25" y="2" width="5" height="5" fill="#d5dbe7"/><rect x="30" y="2" width="5" height="5" fill="#d1c5d5"/><rect x="35" y="2" width="5" height="5" fill="#c1c2c1"/><rect x="40" y="2" width="5" height="5" fill="#b6afaf"/><rect x="45" y="2" width="5" height="5" fill="#9b9c9e"/><rect x="50" y="2" width="5" height="5" fill="#a5a6af"/><rect x="55" y="2" width="5" height="5" fill="#b5aeae"/><rect x="60" y="2" width="5" height="5" fill="#dad3cf"/><rect x="65" y="2" width="5" height="5" fill="#bcbdbc"/><rect x="70" y="2" width="5" height="5" fill="#b4aeae"/><rect x="75" y="2" width="5" height="5" fill="#c9cad0"/><rect x="80" y="2" width="5" height="5" fill="#afb0b8"/><rect x="85" y="2" width="5" height="5" fill="#aba0b3"/><rect x="90" y="2" width="5" height="5" fill="#a3a4ad"/><rect x="95" y="2" width="5" height="5" fill="#a4a5a7"/><rect x="100" y="2" width="5" height="5" fill="#e6dfda"/><rect x="105" y="2" width="5" height="5" fill="#9aa1b3"/><rect x="110" y="2" width="5" height="5" fill="#b4a9bb"/><rect x="115" y="2" width="5" height="5" fill="#b3b4bb"/><rect x="0" y="7" width="5" height="5" fill="#dddde1"/><rect x="5" y="7" width="5" height="5" fill="#d1d8e4"/><rect x="10" y="7" width="5" height="5" fill="#cbccca"/><rect x="15" y="7" width="5" height="5" fill="#b8b1b1"/><rect x="20" y="7" width="5" height="5" fill="#cdced3"/><rect x="25" y="7" width="5" height="5" fill="#dcd5d2"/><rect x="30" y="7" width="5" height="5" fill="#a2a4a5"/><rect x="35" y="7" width="5" height="5" fill="#9a90a4"/><rect x="40" y="7" width="5" height="5" fill="#a59aae"/><rect x="45" y="7" width="5" height="5" fill="#d8d1ce"/><rect x="50" y="7" width="5" height="5" fill="#bdb2c4"/><rect x="55" y="7" width="5" height="5" fill="#b4a9bb"/><rect x="60" y="7" width="5" height="5" fill="#a0999b"/><rect x="65" y="7" width="5" height="5" fill="#979eb0"/><rect x="70" y="7" width="5" height="5" fill="#abacb4"/><rect x="75" y="7" width="5" height="5" fill="#a2a3a5"/><rect x="80" y="7" width="5" height="5" fill="#a9a3a4"/><rect x="85" y="7" width="5" height="5" fill="#d5d5da"/><rect x="90" y="7" width="5" height="5" fill="#ccc5c3"/><rect x="95" y="7" width="5" height="5" fill="#a9aab3"/><rect x="100" y="7" width="5" height="5" fill="#92939e"/><rect x="105" y="7" width="5" height="5" fill="#b1aaab"/><rect x="110" y="7" width="5" height="5" fill="#c1c2c8"/><rect x="115" y="7" width="5" height="5" fill="#c4bdbc"/></svg>
<svg class="abs" style="left:676px;top:386px" width="135" height="14" viewBox="0 0 135 14" shape-rendering="crispEdges"><rect width="135" height="14" fill="#fafafb"/><rect x="2" y="2" width="5" height="5" fill="#bcb5b5"/><rect x="7" y="2" width="5" height="5" fill="#ccc0d0"/><rect x="12" y="2" width="5" height="5" fill="#b0b1b9"/><rect x="17" y="2" width="5" height="5" fill="#a6a7a8"/><rect x="22" y="2" width="5" height="5" fill="#9b9ca6"/><rect x="27" y="2" width="5" height="5" fill="#b6b7b7"/><rect x="32" y="2" width="5" height="5" fill="#dbdcdf"/><rect x="37" y="2" width="5" height="5" fill="#bbbcc3"/><rect x="42" y="2" width="5" height="5" fill="#cbd2de"/><rect x="47" y="2" width="5" height="5" fill="#cdc5c3"/><rect x="52" y="2" width="5" height="5" fill="#bebfbe"/><rect x="57" y="2" width="5" height="5" fill="#c3c4ca"/><rect x="62" y="2" width="5" height="5" fill="#a0a1aa"/><rect x="67" y="2" width="5" height="5" fill="#a1a2ab"/><rect x="72" y="2" width="5" height="5" fill="#c2c3c2"/><rect x="77" y="2" width="5" height="5" fill="#c4c5c4"/><rect x="82" y="2" width="5" height="5" fill="#afa8a9"/><rect x="87" y="2" width="5" height="5" fill="#b6b7b7"/><rect x="92" y="2" width="5" height="5" fill="#9596a1"/><rect x="97" y="2" width="5" height="5" fill="#d5dbe7"/><rect x="102" y="2" width="5" height="5" fill="#a8a9b2"/><rect x="107" y="2" width="5" height="5" fill="#a0a1a3"/><rect x="112" y="2" width="5" height="5" fill="#a6a7a8"/><rect x="117" y="2" width="5" height="5" fill="#969daf"/><rect x="122" y="2" width="5" height="5" fill="#999a9c"/><rect x="127" y="2" width="5" height="5" fill="#989a9c"/><rect x="2" y="7" width="5" height="5" fill="#ccd3e0"/><rect x="7" y="7" width="5" height="5" fill="#ced4e1"/><rect x="12" y="7" width="5" height="5" fill="#bdb2c4"/><rect x="17" y="7" width="5" height="5" fill="#b5aabc"/><rect x="22" y="7" width="5" height="5" fill="#b6b7b6"/><rect x="27" y="7" width="5" height="5" fill="#9596a0"/><rect x="32" y="7" width="5" height="5" fill="#b4adad"/><rect x="37" y="7" width="5" height="5" fill="#afb0b8"/><rect x="42" y="7" width="5" height="5" fill="#aaabac"/><rect x="47" y="7" width="5" height="5" fill="#d2d2d7"/><rect x="52" y="7" width="5" height="5" fill="#939aac"/><rect x="57" y="7" width="5" height="5" fill="#b3b4bc"/><rect x="62" y="7" width="5" height="5" fill="#bdbdbd"/><rect x="67" y="7" width="5" height="5" fill="#9698a2"/><rect x="72" y="7" width="5" height="5" fill="#aaabb4"/><rect x="77" y="7" width="5" height="5" fill="#c8c9cf"/><rect x="82" y="7" width="5" height="5" fill="#e4d8e6"/><rect x="87" y="7" width="5" height="5" fill="#c6cdda"/><rect x="92" y="7" width="5" height="5" fill="#c7c0be"/><rect x="97" y="7" width="5" height="5" fill="#b3b4b4"/><rect x="102" y="7" width="5" height="5" fill="#afb6c5"/><rect x="107" y="7" width="5" height="5" fill="#d4ccca"/><rect x="112" y="7" width="5" height="5" fill="#97989b"/><rect x="117" y="7" width="5" height="5" fill="#d8cddc"/><rect x="122" y="7" width="5" height="5" fill="#9c9598"/><rect x="127" y="7" width="5" height="5" fill="#b2b9c8"/></svg>
<!--/MOSB-->
<div class="abs" style="left:451px;top:90px;width:1px;height:463px;background:#b4b6bb"></div>
</body>
</html>
